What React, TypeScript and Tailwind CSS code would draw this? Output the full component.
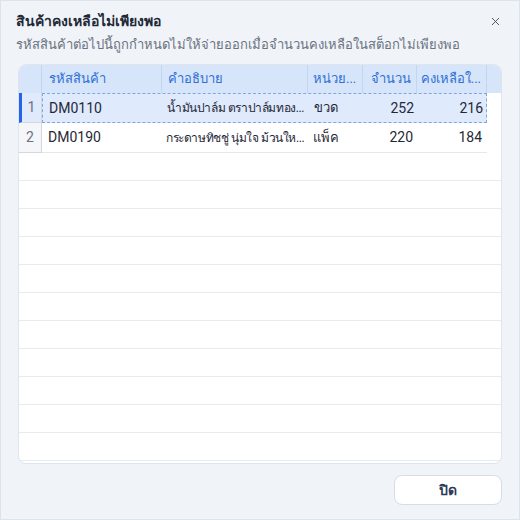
import { X } from "lucide-react";

const rows = [
  { no: 1, code: "DM0110", desc: "น้ำมันปาล์ม ตราปาล์มทอง...", unit: "ขวด", qty: 252, left: 216 },
  { no: 2, code: "DM0190", desc: "กระดาษทิชชู่ นุ่มใจ ม้วนให...", unit: "แพ็ค", qty: 220, left: 184 },
];

const cols = "grid grid-cols-[23px_120px_146px_55px_54px_70px]";

export default function App() {
  const fillers = Array.from({ length: 11 });

  return (
    <div
      className="w-[520px] h-[520px] bg-[#f0f4f9] border border-[#dde3ec] flex flex-col text-[#1f2937]"
      style={{ fontFamily: 'Roboto, "Noto Sans", sans-serif' }}
    >
      <div className="px-[15px] pt-[9px]">
        <div className="flex items-center justify-between">
          <h1 className="text-[14px] font-bold leading-[22px]">สินค้าคงเหลือไม่เพียงพอ</h1>
          <button className="text-[#374151] mr-[2px]" aria-label="close">
            <X size={13} strokeWidth={1.6} />
          </button>
        </div>
        <p className="text-[13px] text-[#6b7280] leading-[24px] mt-[1px] whitespace-nowrap">
          รหัสสินค้าต่อไปนี้ถูกกำหนดไม่ให้จ่ายออกเมื่อจำนวนคงเหลือในสต็อกไม่เพียงพอ
        </p>
      </div>

      <div className="mx-[17px] mt-[7px] h-[400px] rounded-lg border border-[#dfe5ee] bg-white overflow-hidden flex flex-col">
        <div className="flex bg-[#d6e5f9] h-[28px] shrink-0 text-[13px] text-[#2f6fd6]">
          <div className={`${cols} w-[468px]`}>
            <div className="border-r border-[#c2d6f2]" />
            <div className="border-r border-[#c2d6f2] px-[7px] flex items-center">รหัสสินค้า</div>
            <div className="border-r border-[#c2d6f2] px-[6px] flex items-center">คำอธิบาย</div>
            <div className="border-r border-[#c2d6f2] px-[5px] flex items-center whitespace-nowrap">หน่วย...</div>
            <div className="border-r border-[#c2d6f2] px-[5px] flex items-center justify-end">จำนวน</div>
            <div className="border-r border-[#c2d6f2] pl-[4px] pr-[5px] flex items-center justify-end whitespace-nowrap">คงเหลือใ...</div>
          </div>
          <div className="flex-1" />
        </div>

        {rows.map((r, i) => {
          const sel = i === 0;
          return (
            <div
              key={r.no}
              className={`${cols} w-[468px] h-[30px] shrink-0 text-[14px] ${sel ? "bg-[#dfeafc]" : "bg-white"}`}
            >
              <div
                className={`flex items-center justify-center text-[#6b7280] border-r border-b border-[#d3d7de] ${
                  sel ? "bg-[#dfeafc] border-l-[3px] border-l-[#2563eb]" : "bg-[#f4f6fa]"
                }`}
              >
                {r.no}
              </div>
              <div
                className={`col-span-5 grid grid-cols-[120px_146px_55px_54px_70px] items-center ${
                  sel ? "border border-dashed border-[#7ea7e2]" : "border-b border-[#e3e8ef]"
                }`}
              >
                <div className="px-[6px]">{r.code}</div>
                <div className="px-[4px] text-[12px] tracking-[-0.4px] whitespace-nowrap">{r.desc}</div>
                <div className="px-[5px] text-[13px]">{r.unit}</div>
                <div className="px-[4px] text-right">{r.qty}</div>
                <div className="pl-[4px] pr-[5px] text-right">{r.left}</div>
              </div>
            </div>
          );
        })}

        {fillers.map((_, i) => (
          <div key={i} className="h-[28px] shrink-0 border-b border-[#e6ebf2]" />
        ))}
      </div>

      <div className="flex justify-end px-[17px] pt-[11px]">
        <button className="w-[108px] h-[30px] rounded-lg border border-[#d5dde9] bg-white text-[14px] font-bold text-[#2e3a59]">
          ปิด
        </button>
      </div>
    </div>
  );
}
